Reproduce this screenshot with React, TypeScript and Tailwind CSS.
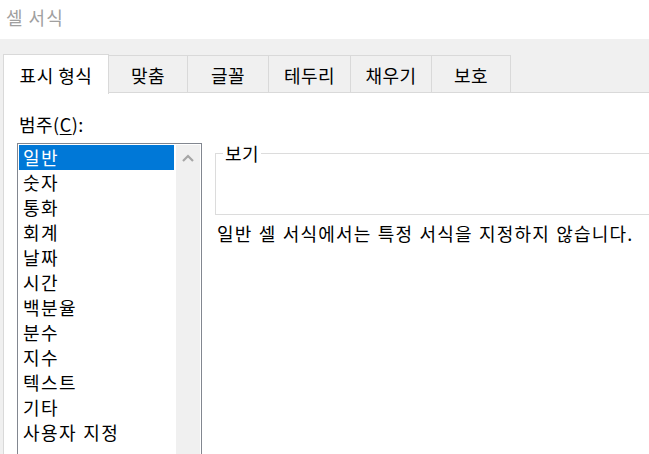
import React from 'react';

const tabs = [
  { label: '표시 형식', w: 'w-[106px]' },
  { label: '맞춤', w: 'w-[79px]' },
  { label: '글꼴', w: 'w-[81px]' },
  { label: '테두리', w: 'w-[82px]' },
  { label: '채우기', w: 'w-[81px]' },
  { label: '보호', w: 'w-[79px]' },
];

const categories = [
  '일반',
  '숫자',
  '통화',
  '회계',
  '날짜',
  '시간',
  '백분율',
  '분수',
  '지수',
  '텍스트',
  '기타',
  '사용자 지정',
];

const App: React.FC = () => {
  return (
    <div className="w-[649px] h-[454px] overflow-hidden flex flex-col bg-white text-black font-['Noto_Sans_CJK_KR','Noto_Sans',sans-serif] text-[18px]">
      {/* title bar */}
      <div className="h-[39px] shrink-0 pl-[6px] pt-[4px] leading-[26px] tracking-[1px] text-[#a0a0a0]">셀 서식</div>

      <div className="flex-1 flex flex-col bg-[#f0f0f0] pl-[3px]">
        {/* tab strip */}
        <div className="h-[54px] shrink-0 flex items-end">
          {tabs.map((t, i) =>
            i === 0 ? (
              <div
                key={t.label}
                className={`${t.w} h-[40px] shrink-0 bg-white border-l border-t border-r border-[#d9d9d9] flex items-center justify-center leading-[24px] tracking-[0.5px] relative z-10 -mb-px`}
              >
                {t.label}
              </div>
            ) : (
              <div
                key={t.label}
                className={`${t.w} h-[38px] shrink-0 border-t border-r border-b border-[#d9d9d9] flex items-center justify-center leading-[24px] tracking-[0.5px] pt-[2px]`}
              >
                {t.label}
              </div>
            )
          )}
          <div className="flex-1 border-b border-[#d9d9d9]" />
        </div>

        {/* page body */}
        <div className="flex-1 bg-white border-l border-[#d9d9d9] flex tracking-[1.4px] [word-spacing:1px]">
          <div className="pl-[13px] pt-[19px] flex flex-col">
            <div className="leading-[24px] pl-[2px] tracking-[0.5px]">
              범주(<span className="underline underline-offset-2">C</span>):
            </div>
            <div className="mt-[7px] w-[185px] h-[320px] border border-[#828790] p-[1px] flex">
              <div className="flex-1 flex flex-col">
                {categories.map((c, i) => (
                  <div
                    key={c}
                    className={`h-[25px] shrink-0 pl-[4px] leading-[25px] whitespace-nowrap ${
                      i === 0 ? 'bg-[#0078d7] text-white' : ''
                    }`}
                  >
                    {c}
                  </div>
                ))}
              </div>
              <div className="w-[24px] ml-[2px] bg-[#f0f0f0] flex justify-center pt-[9px]">
                <svg width="12" height="8" viewBox="0 0 12 8">
                  <path d="M1 7 L6 2 L11 7" fill="none" stroke="#a6a6a6" strokeWidth="2.2" />
                </svg>
              </div>
            </div>
          </div>

          <div className="pl-[13px] pt-[49px] flex flex-col">
            <fieldset className="w-[460px] h-[73px] border border-[#dcdcdc] px-[7px] m-0">
              <legend className="px-[2px] leading-[22px] tracking-[0.5px]">보기</legend>
            </fieldset>
            <div className="mt-[6px] pl-[2px] leading-[24px] whitespace-nowrap tracking-[1.2px]">
              일반 셀 서식에서는 특정 서식을 지정하지 않습니다.
            </div>
          </div>
        </div>
      </div>
    </div>
  );
};

export default App;
